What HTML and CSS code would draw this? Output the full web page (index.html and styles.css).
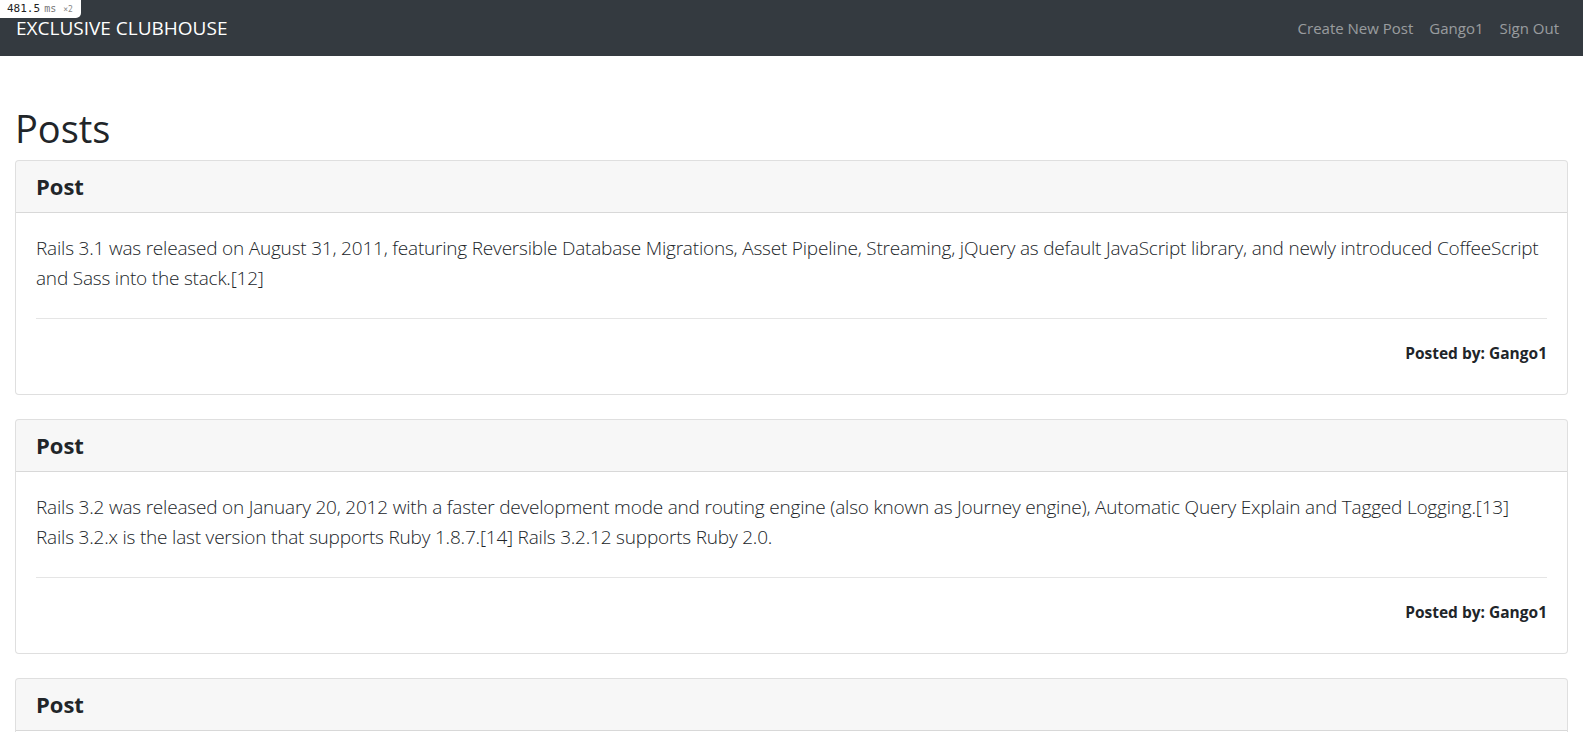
FILE: index.html
```html
<!DOCTYPE html>
<html lang="en">
<head>
<meta charset="utf-8">
<title>Exclusive Clubhouse</title>
<link rel="stylesheet" href="styles.css">
</head>
<body>
<div class="profiler-badge"><span class="pb-time">481.5</span><span class="pb-unit">ms</span><span class="pb-count">×2</span></div>
<nav class="navbar">
  <a class="brand" href="#">EXCLUSIVE CLUBHOUSE</a>
  <ul class="nav-links">
    <li><a href="#">Create New Post</a></li>
    <li><a href="#">Gango1</a></li>
    <li><a href="#">Sign Out</a></li>
  </ul>
</nav>
<main class="container">
  <h1 class="page-title">Posts</h1>
  <article class="card">
    <header class="card-header"><h4 class="card-title">Post</h4></header>
    <div class="card-body">
      <p class="lead">Rails 3.1 was released on August 31, 2011, featuring Reversible Database Migrations, Asset Pipeline, Streaming, jQuery as default JavaScript library, and newly introduced CoffeeScript and Sass into the stack.[12]</p>
      <hr class="divider">
      <p class="posted-by">Posted by: Gango1</p>
    </div>
  </article>
  <article class="card">
    <header class="card-header"><h4 class="card-title">Post</h4></header>
    <div class="card-body">
      <p class="lead">Rails 3.2 was released on January 20, 2012 with a faster development mode and routing engine (also known as Journey engine), Automatic Query Explain and Tagged Logging.[13] Rails 3.2.x is the last version that supports Ruby 1.8.7.[14] Rails 3.2.12 supports Ruby 2.0.</p>
      <hr class="divider">
      <p class="posted-by">Posted by: Gango1</p>
    </div>
  </article>
  <article class="card">
    <header class="card-header"><h4 class="card-title">Post</h4></header>
    <div class="card-body">
      <p class="lead">Rails 4.0 was released on June 25, 2013, introducing Russian Doll Caching, Turbolinks, Live Streaming as well as making Active Resource, Active Record Observer and other components optional by splitting them as gems.</p>
      <hr class="divider">
      <p class="posted-by">Posted by: Gango1</p>
    </div>
  </article>
</main>
</body>
</html>
```

FILE: styles.css
```css
* { box-sizing: border-box; }

html, body {
  margin: 0;
  padding: 0;
}

body {
  font-family: "Open Sans", "Noto Sans", "Liberation Sans", sans-serif;
  font-size: 16px;
  line-height: 1.5;
  color: #212529;
  background: #ffffff;
}

.profiler-badge {
  position: absolute;
  top: 0;
  left: 0;
  z-index: 10;
  display: flex;
  align-items: baseline;
  height: 18px;
  padding: 2px 8px 0 7px;
  background: #ffffff;
  border-bottom-right-radius: 5px;
  font-family: "DejaVu Sans Mono", "Liberation Mono", monospace;
  line-height: 14px;
}
.pb-time { font-size: 11px; color: #222; }
.pb-unit { font-size: 10px; color: #777; margin-left: 4px; }
.pb-count { font-size: 8px; color: #888; margin-left: 7px; }

.navbar {
  display: flex;
  align-items: center;
  justify-content: space-between;
  height: 56px;
  padding: 8px 16px;
  background: #343a40;
}

.brand {
  padding: 5px 0;
  font-size: 19px;
  line-height: 30px;
  color: #ffffff;
  text-decoration: none;
  white-space: nowrap;
}

.nav-links {
  display: flex;
  margin: 0;
  padding: 0;
  list-style: none;
}
.nav-links a {
  display: block;
  padding: 8px;
  font-size: 15px;
  line-height: 24px;
  color: rgba(255, 255, 255, 0.5);
  text-decoration: none;
}

.container {
  padding: 48px 15px 0;
}

.page-title {
  margin: 0 0 8px;
  font-size: 38px;
  font-weight: 500;
  line-height: 48px;
}

.card {
  margin-bottom: 24px;
  border: 1px solid rgba(0, 0, 0, 0.125);
  border-radius: 4px;
  background: #ffffff;
}

.card-header {
  padding: 12px 20px;
  background: rgba(0, 0, 0, 0.03);
  border-bottom: 1px solid rgba(0, 0, 0, 0.125);
  border-radius: 3px 3px 0 0;
}

.card-title {
  margin: 0;
  font-size: 22px;
  font-weight: 700;
  line-height: 27px;
}

.card-body {
  padding: 20px 20px 29px;
}

.lead {
  margin: 0 0 25px;
  font-size: 19px;
  font-weight: 300;
  line-height: 30px;
  letter-spacing: -0.2px;
}

.divider {
  margin: 0 0 22px;
  border: 0;
  border-top: 1px solid rgba(0, 0, 0, 0.1);
}

.posted-by {
  margin: 0;
  text-align: right;
  font-size: 15.5px;
  font-weight: 700;
  line-height: 24px;
}
```
